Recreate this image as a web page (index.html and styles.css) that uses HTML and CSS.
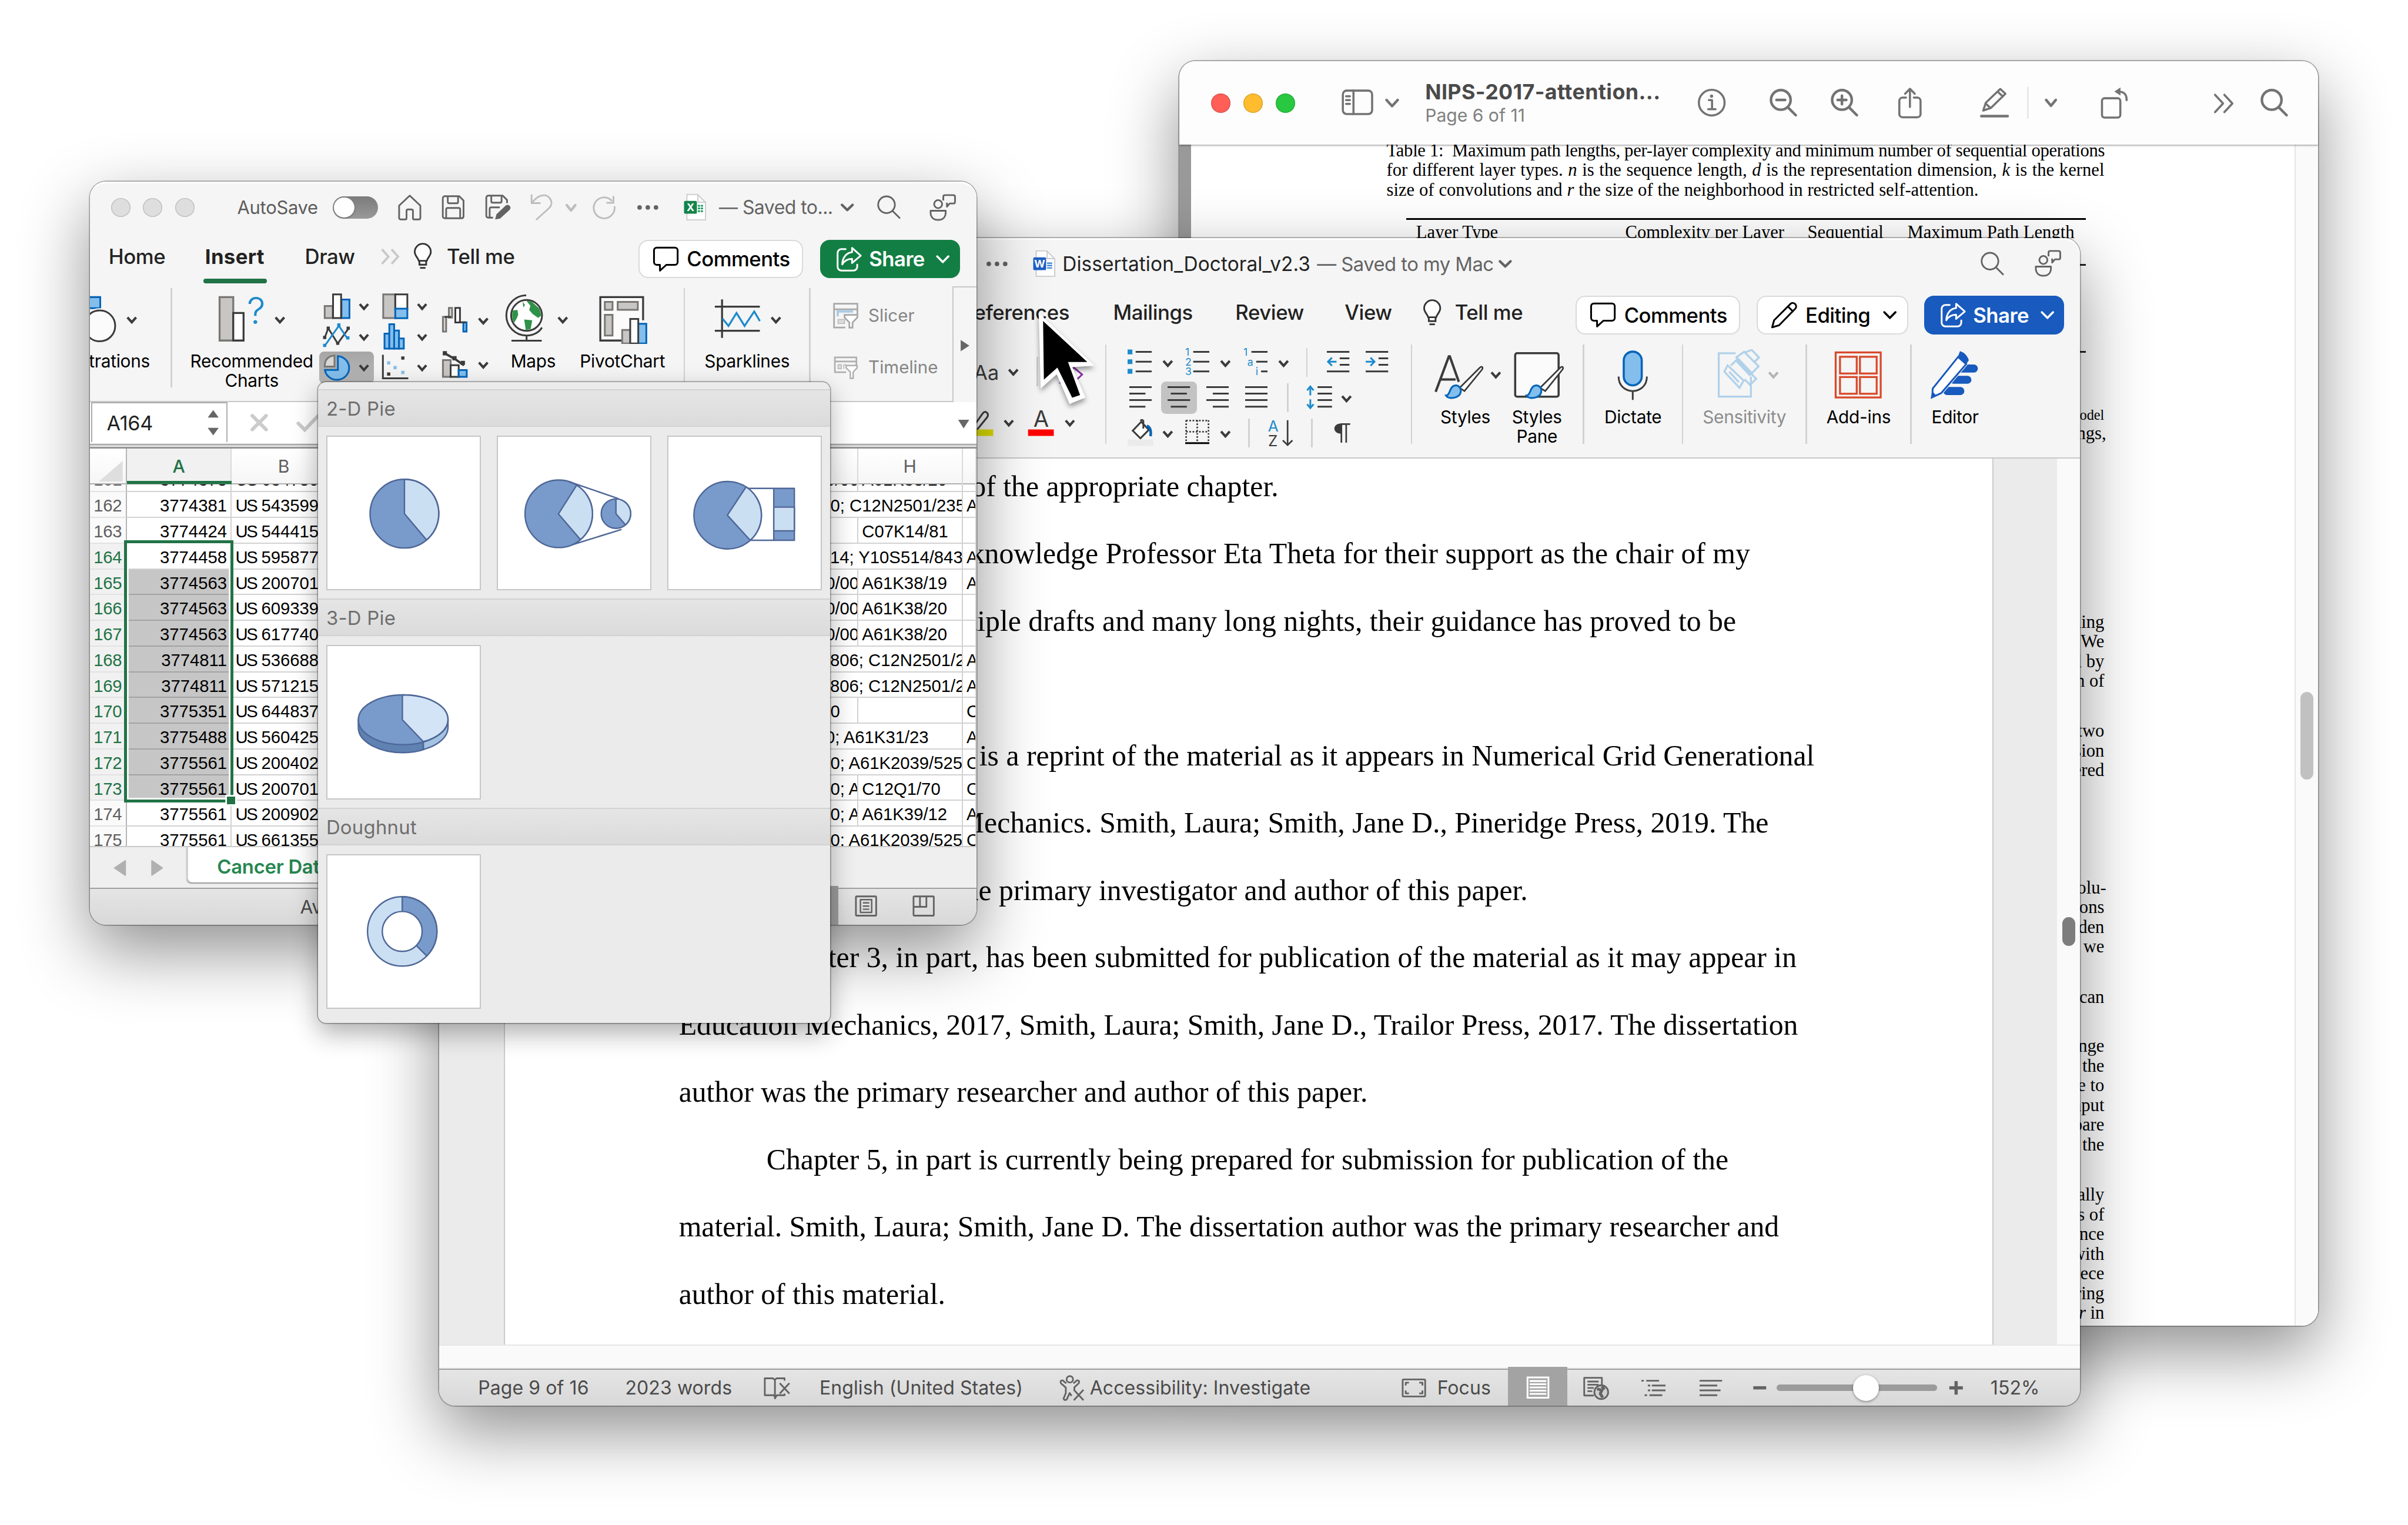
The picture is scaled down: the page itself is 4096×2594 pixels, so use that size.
FILE: index.html
```html
<!DOCTYPE html>
<html lang="en">
<head>
<meta charset="utf-8">
<title>Desktop</title>
<link rel="stylesheet" href="styles.css">
</head>
<body>
<main class="desktop">

<!-- ===== Preview ===== -->
<section class="window preview">
  <header class="pv-bar">
    <div class="lights"><i class="red"></i><i class="amber"></i><i class="green"></i></div>
    <svg class="g" width="20" height="18" viewBox="0 0 20 18"><rect x=".8" y="1.5" width="18.2" height="14.6" rx="2.4"/><path d="M7.4 1.5v14.6M2.8 5h2.4M2.8 7.4h2.4M2.8 9.8h2.4"/></svg>
    <svg class="g bold" width="10" height="8" viewBox="0 0 10 8"><path d="M1.6 2.2l3.5 3.8 3.5-3.8"/></svg>
    <div class="pv-title"><b>NIPS-2017-attention...</b><span>Page 6 of 11</span></div>
    <svg class="g" width="18" height="18" viewBox="0 0 18 18"><circle cx="9" cy="9" r="8"/><path d="M7.2 7.4h2v5.6M6.8 13.1h4.6"/><circle class="dot" cx="8.9" cy="4.9" r="1"/></svg>
    <svg class="g bold" width="18" height="18" viewBox="0 0 18 18"><circle cx="7" cy="7.3" r="6.1"/><path d="M11.5 12l4.8 4.8M4.3 7.3h5.4"/></svg>
    <svg class="g bold" width="18" height="18" viewBox="0 0 18 18"><circle cx="7" cy="7.3" r="6.1"/><path d="M11.5 12l4.8 4.8M4.3 7.3h5.4M7 4.6v5.4"/></svg>
    <svg class="g" width="16" height="20" viewBox="0 0 16 20"><path d="M5.2 6.6H3A2 2 0 0 0 1 8.6v8.2a2 2 0 0 0 2 2h9.2a2 2 0 0 0 2-2V8.6a2 2 0 0 0-2-2H10M7.6 12.4V1.2M4.6 4.2l3-3.1 3 3.1"/></svg>
    <svg class="g" width="18" height="20" viewBox="0 0 18 20"><path d="M2 14.6l1.6-4.8L12.6 1.2l3.2 3-9 8.8zM3.4 10.2l3.2 2.9M11 2.900l3.200 3"/><path class="bold" d="M.8 18.1h16.4"/></svg>
    <i class="pv-sep"></i>
    <svg class="g bold" width="10" height="8" viewBox="0 0 10 8"><path d="M2 2.2l3 3.6 3-3.6"/></svg>
    <svg class="g" width="18" height="20" viewBox="0 0 18 20"><rect x=".9" y="7" width="11.4" height="12" rx="1.6"/><path d="M16.2 8.2C16.3 5 15 2.9 11.2 2.8"/><path class="dot" d="M12.4.3v5L8.6 2.8z"/></svg>
    <svg class="g" width="14" height="12" viewBox="0 0 14 12"><path d="M1 .8l5 5.4-5 5.4M6.8.8l5 5.4-5 5.4"/></svg>
    <svg class="g bold" width="18" height="18" viewBox="0 0 18 18"><circle cx="7" cy="7.3" r="6.1"/><path d="M11.5 12l4.8 4.8"/></svg>
  </header>
  <div class="pv-body">
    <div class="pv-edge"></div>
    <article class="paper">
      <p class="cap">Table 1:&nbsp; Maximum path lengths, per-layer complexity and minimum number of sequential operations</p>
      <p class="cap">for different layer types. <em>n</em> is the sequence length, <em>d</em> is the representation dimension, <em>k</em> is the kernel</p>
      <p class="cap last">size of convolutions and <em>r</em> the size of the neighborhood in restricted self-attention.</p>
      <div class="tbl">
        <div class="tbl-head"><span>Layer Type</span><span>Complexity per Layer</span><span>Sequential</span><span>Maximum Path Length</span></div>
        <hr class="rule one"><hr class="rule two">
      </div>
      <div class="frag f0"><small>model</small><span>ngs,</span></div>
      <div class="frag f1">ling<br>We<br>l by<br>n of</div>
      <div class="frag f2">two<br>sion<br>ered</div>
      <div class="frag f3"><span>olu-</span><br>ons<br>den<br>we</div>
      <div class="frag f4">can</div>
      <div class="frag f5">nge<br>the<br>e to<br>nput<br>pare<br>the</div>
      <div class="frag f6">ally<br>s of<br>nce<br>with<br>iece<br>ring<br><em>r</em> in</div>
    </article>
    <div class="pv-scroll"><i></i></div>
  </div>
</section>

<!-- ===== Word ===== -->
<section class="window word">
  <header class="w-title">
    <svg class="tb" width="14" height="16" viewBox="0 0 14 16"><g class="dot"><circle cx="1.8" cy="8" r="1.4"/><circle cx="6.9" cy="8" r="1.4"/><circle cx="12" cy="8" r="1.4"/></g></svg>
    <svg class="file" width="15" height="18" viewBox="0 0 15 18"><path class="sheet" d="M2 1h6.6L13.6 6v10.8H2z"/><path class="fold" d="M8.8 1v4.8h4.8"/><rect x=".2" y="5" width="8" height="8" rx=".8" fill="#1f5fc4"/><text x="4.2" y="11.3">W</text><path d="M8.8 8.6h3.2M8.8 10.1h3.2M8.8 11.6h3.2" stroke="#2b7cd3" stroke-width=".8"/></svg>
    <span class="doc">Dissertation_Doctoral_v2.3</span>
    <span class="saved">— Saved to my Mac</span>
    <svg class="tb bold" width="10" height="16" viewBox="0 0 10 16"><path d="M1.6 6.4l3.3 3.2 3.3-3.2"/></svg>
    <svg class="tb" width="16" height="16" viewBox="0 0 16 16"><circle cx="6.2" cy="6.3" r="5.2"/><path d="M10 10.2l4.6 4.6"/></svg>
    <svg class="tb" width="17" height="17" viewBox="0 0 17 17"><circle cx="5.4" cy="6.3" r="2.5"/><path d="M.7 10.4h9.4v1c0 3.200-2 4.700-4.700 4.700S.7 14.600.7 11.400zM9.600.7h5.200q1.100 0 1.100 1.100v3q0 1.100-1.100 1.100h-2.200L10.900 7.900V5.900h-.600M9.600.7q-1 0-1 1.100v2.200"/></svg>
  </header>
  <div class="w-tabs">
    <span>eferences</span><span>Mailings</span><span>Review</span><span>View</span>
    <svg class="bulb" width="12" height="17" viewBox="0 0 12 17"><path d="M3.400 11.200C3 9.200.900 8.200.900 5.600a5 5 0 0 1 10 0c0 2.600-2.100 3.600-2.500 5.600zM3.800 11.200v2.400h4.200v-2.400"/><path d="M4.200 15.600h3.400"/></svg>
    <span>Tell me</span>
    <div class="btn b-comm"><svg width="17" height="16" viewBox="0 0 17 16"><path d="M2.600.8h11.300a1.700 1.700 0 0 1 1.700 1.700v7.300a1.700 1.700 0 0 1-1.700 1.700H8.600l-4 3.600v-3.600h-2A1.700 1.700 0 0 1 .9 9.800V2.500A1.700 1.700 0 0 1 2.600.8z"/></svg>Comments</div>
    <div class="btn b-edit"><svg width="17" height="17" viewBox="0 0 17 17"><path d="M.9 16l1.200-4.400L12.200 1.500c2-1.900 4.900.9 3 3L5.200 14.700zM10.700 3l3 3"/></svg>Editing<svg class="chev" width="10" height="8" viewBox="0 0 10 8"><path d="M1.500 2.200l3.500 3.600 3.500-3.600"/></svg></div>
    <div class="btn b-share blue"><svg width="17" height="16" viewBox="0 0 17 16"><path d="M6 1.700H3.400A2.400 2.400 0 0 0 1 4.100v8.600a2.400 2.400 0 0 0 2.400 2.400h7.400a2.400 2.400 0 0 0 2.400-2.400v-1.400M10 1l5.400 4.800L10 10.400V7.800C7 7.800 5.300 8.900 3.900 11.200 4 7 6.500 4 10 3.700z"/></svg>Share<svg class="chev" width="10" height="8" viewBox="0 0 10 8"><path d="M1.500 2.200l3.500 3.600 3.500-3.600"/></svg></div>
  </div>
  <div class="w-ribbon">
    <div class="fontgrp">
      <div class="r1">
        <svg class="ic" width="34" height="18" viewBox="0 0 34 18"><text x="-.6" y="14.200" font-size="12.500">Aa</text><path class="cv" d="M21.300 7.900l2.700 3 2.700-3"/></svg>
        <i class="ssep"></i>
        <svg class="ic" width="30" height="18" viewBox="0 0 30 18"><path d="M14 16l8-9.500 5.300 4.500-5.300 5z" fill="#fff" stroke="#8a2da5"/></svg>
      </div>
      <div class="r2">
        <svg class="ic" width="36" height="18" viewBox="0 0 36 18"><path d="M3 11.500l6-8.500q1.500-2 3 0 .6 1.300-.4 2.600l-6 7.400-3 .500z"/><path d="M1 15h14.500" stroke="#dede00" stroke-width="4"/><path class="cv" d="M22.600 7.400l2.600 3 2.600-3"/></svg>
        <svg class="ic" width="34" height="18" viewBox="0 0 34 18"><text x="4.300" y="11.200" font-size="14">A</text><path d="M1 15h16" stroke="#f00" stroke-width="4"/><path class="cv" d="M24.400 7.400l2.600 3 2.600-3"/></svg>
      </div>
    </div>
    <i class="sep"></i>
    <div class="para">
      <div class="p1">
        <svg class="ic" width="30" height="18" viewBox="0 0 30 18"><path d="M5 2.400h10M5 8.500h10M5 14.500h10"/><path d="M0 2.400h3M0 8.500h3M0 14.500h3" stroke="#1e8bcd" stroke-width="3"/><path class="cv" d="M22.300 8l2.700 3 2.700-3"/></svg>
        <svg class="ic" width="30" height="18" viewBox="0 0 30 18"><path d="M5 2.400h10M5 8.500h10M5 14.500h10"/><g class="bt"><text x="0" y="4.900">1</text><text x="0" y="10.900">2</text><text x="0" y="16.900">3</text></g><path class="cv" d="M22.300 8l2.700 3 2.700-3"/></svg>
        <svg class="ic" width="30" height="18" viewBox="0 0 30 18"><path d="M5 2.400h10M8 8.500h7M11 14.500h4"/><g class="bt"><text x="0" y="4.900">1</text><text x="2.500" y="10.900">a</text><text x="7.600" y="16.900">i</text></g><path class="cv" d="M22.300 8l2.700 3 2.700-3"/></svg>
        <i class="ssep"></i>
        <svg class="ic" width="15" height="18" viewBox="0 0 15 18"><path d="M0 2.400h14M8 6.400h6M8 10.400h6M0 14.500h14"/><path d="M6 8.500H.8M3.200 6L.7 8.500 3.200 11" stroke="#1e8bcd"/></svg>
        <svg class="ic" width="15" height="18" viewBox="0 0 15 18"><path d="M0 2.400h14M8 6.400h6M8 10.400h6M0 14.500h14"/><path d="M0 8.500h5.400M3 6l2.500 2.500L3 11" stroke="#1e8bcd"/></svg>
      </div>
      <div class="p2">
        <svg class="ic" width="14" height="18" viewBox="0 0 14 18"><path d="M0 2.400h14M0 6.400h10M0 10.400h14M0 14.500h10"/></svg>
        <span class="on"><svg class="ic" width="14" height="18" viewBox="0 0 14 18"><path d="M0 2.400h14M2 6.400h10M0 10.400h14M2 14.500h10"/></svg></span>
        <svg class="ic" width="14" height="18" viewBox="0 0 14 18"><path d="M0 2.400h14M4 6.400h10M0 10.400h14M4 14.500h10"/></svg>
        <svg class="ic" width="14" height="18" viewBox="0 0 14 18"><path d="M0 2.400h14M0 6.400h14M0 10.400h14M0 14.500h14"/></svg>
        <i class="ssep"></i>
        <svg class="ic" width="30" height="18" viewBox="0 0 30 18"><path d="M7 2.400h9M7 6.400h9M7 10.400h9M7 14.500h9"/><path d="M2.500 7.500V2M.5 4.400l2-2.400 2 2.400M2.500 10v5.500M.5 13l2 2.400 2-2.400" stroke="#1e8bcd"/><path class="cv" d="M22.300 8l2.700 3 2.700-3"/></svg>
      </div>
      <div class="p3">
        <svg class="ic" width="30" height="18" viewBox="0 0 30 18"><path d="M3.200 7.500L8.500 2l4.700 5-5.200 5.300zM9.800 6.200V1.400Q8.900.2 8 1.400" fill="#fff"/><path d="M12 4.500q3 1 2.300 6.500" stroke="#0364b8" stroke-width="1.600"/><path d="M0 15h16" stroke="#ebebeb" stroke-width="4"/><path class="cv" d="M22.300 8l2.700 3 2.700-3"/></svg>
        <svg class="ic" width="30" height="18" viewBox="0 0 30 18"><path d="M.6 1.200h14M.6 8.200h14M.6 1v13M7.500 1v13M14.500 1v13" stroke-width="1" stroke-dasharray="1 1"/><path d="M0 15.300h15" stroke="#000"/><path class="cv" d="M22.300 8l2.700 3 2.700-3"/></svg>
        <i class="ssep"></i>
        <svg class="ic" width="18" height="18" viewBox="0 0 18 18"><text x=".3" y="8" font-size="9.500" style="fill:#1e8bcd">A</text><text x=".4" y="17" font-size="9.500">Z</text><path d="M12.500 1v15.500M9.500 13.500l3 3 3-3" stroke-width="1"/></svg>
        <i class="ssep"></i>
        <svg class="ic" width="12" height="18" viewBox="0 0 12 18"><path d="M5 3.400h5.500M5 3v12M8 3v12" stroke-width="1"/><path d="M5 3C-.8 3-.8 9.400 5 9.400z" fill="#3b3b3b" stroke="none"/></svg>
      </div>
    </div>
    <i class="sep"></i>
    <div class="big k-styles"><svg class="ic" width="50" height="32" viewBox="0 0 50 32"><path d="M6.600 26.500L14.800 4.500h.6l5.600 15.800M9.500 18.800h9.500" stroke-width="1.500"/><path d="M21.500 24L34 11.500c1.300-1.200 2.400-.2 1.300 1.300L24.500 26z" fill="#fff" stroke-width="1"/><path d="M13 28.800c2.800.1 2-6.300 6.200-6.300 4 0 5.200 8-3.400 7.800-1.600-.1-2.300-.7-2.800-1.500z" fill="#83beec" stroke="#0364b8" stroke-width="1.100"/><path class="cv" d="M41.300 14.400l2.700 3 2.700-3"/></svg><span>Styles</span></div>
    <div class="big k-pane"><svg class="ic" width="36" height="32" viewBox="0 0 36 32"><rect x="4.500" y="2.500" width="27" height="27" rx="1.200" fill="#fbfbfb" stroke-width="1.300"/><path d="M20 24L32.500 11.500c1.300-1.200 2.400-.2 1.300 1.300L23.200 26z" fill="#fff" stroke-width="1"/><path d="M11.500 28.800c2.800.1 2-6.300 6.200-6.300 4 0 5.200 8-3.400 7.800-1.600-.1-2.300-.7-2.800-1.500z" fill="#83beec" stroke="#0364b8" stroke-width="1.100"/></svg><span>Styles<br>Pane</span></div>
    <i class="sep"></i>
    <div class="big k-dict"><svg class="ic" width="24" height="32" viewBox="0 0 24 32"><rect x="6.200" y="1.500" width="11.200" height="21" rx="5.600" fill="#83beec" stroke="#0364b8" stroke-width="1.300"/><path d="M3 17c0 12 17.600 12 17.600 0M11.800 26.200v5.300" stroke-width="1.100"/></svg><span>Dictate</span></div>
    <i class="sep"></i>
    <div class="big k-sens dim"><svg class="ic" width="46" height="32" viewBox="0 0 46 32"><g stroke="#b0d1ea" stroke-width="1.200"><path d="M14 2.500H3.500v27h20V17"/><path d="M11 10.200l3.800-3.800 12 12-3.800 3.800-3.500-3.500M14.500 5l4.800-3.400 9 9-4.500 4.600zM20 2l4-1.600 4.500 4.800-3.200 3"/><path d="M9 10l10 9.500-2.600 4.500L7 14zM10 14l6 6.500"/></g><path d="M14.800 6.400l9 9.500" stroke="#b0d1ea" stroke-width="3"/><path class="cv" style="stroke:#b5b5b5" d="M34.800 14.400l2.700 3 2.700-3"/></svg><span>Sensitivity</span></div>
    <i class="sep"></i>
    <div class="big k-add"><svg class="ic" width="30" height="32" viewBox="0 0 30 32"><g stroke="#d9492a" stroke-width="1.200"><rect x=".9" y="2" width="28" height="28"/><rect x="3.600" y="4.700" width="10.400" height="10.400"/><rect x="16" y="4.700" width="10.400" height="10.400"/><rect x="3.600" y="17.300" width="10.400" height="10.400"/><rect x="16" y="17.300" width="10.400" height="10.400"/></g></svg><span>Add-ins</span></div>
    <i class="sep"></i>
    <div class="big k-ed"><svg class="ic" width="32" height="32" viewBox="0 0 32 32"><path d="M19 12h8.600M15 19h8.600M11 26h8.200" stroke="#185abd" stroke-width="5" stroke-linecap="round"/><path d="M2 24.500L17.500 5l5 4.500L7.300 27.300.9 31z" fill="#fff" stroke="#f5f5f5" stroke-width="2"/><path d="M2 24.500L17.800 4.800l5 4.500L7.300 27.300l-5.500 2.500z" fill="#fff" stroke="#185abd" stroke-width="1.100"/><path d="M17.500 5l1.500-3.800q4 1.300 5.500 5.600L22.800 9.500zM1.700 26l2.700 3L.7 31z" fill="#185abd" stroke="none"/></svg><span>Editor</span></div>
  </div>
  <div class="w-doc">
    <div class="page">
      <p class="end" style="width:372.800px">of the appropriate chapter.</p>
      <p class="end" style="width:666px">knowledge Professor Eta Theta for their support as the chair of my</p>
      <p class="end" style="width:657.300px">tiple drafts and many long nights, their guidance has proved to be</p>
      <p>&nbsp;</p>
      <p class="end" style="width:706px">is a reprint of the material as it appears in Numerical Grid Generational</p>
      <p class="end" style="width:677.500px">Mechanics. Smith, Laura; Smith, Jane D., Pineridge Press, 2019. The</p>
      <p class="end" style="width:527.800px">he primary investigator and author of this paper.</p>
      <p class="ind">Chapter 3, in part, has been submitted for publication of the material as it may appear in</p>
      <p>Education Mechanics, 2017, Smith, Laura; Smith, Jane D., Trailor Press, 2017. The dissertation</p>
      <p>author was the primary researcher and author of this paper.</p>
      <p class="ind">Chapter 5, in part is currently being prepared for submission for publication of the</p>
      <p>material. Smith, Laura; Smith, Jane D. The dissertation author was the primary researcher and</p>
      <p>author of this material.</p>
    </div>
    <div class="w-vscroll"><i></i></div>
  </div>
  <div class="w-hscroll"></div>
  <footer class="w-status">
    <span>Page 9 of 16</span><span>2023 words</span>
    <svg class="tb" width="17" height="16" viewBox="0 0 17 16"><path d="M7 13.500l-.8-1H.7V2h5l1.200 1 1.200-1H13v1.500M7 3v11.500l1.200-2H13v-1M10 5l6 6.500M16 5l-6 6.500"/></svg>
    <span>English (United States)</span>
    <svg class="tb" width="17" height="17" viewBox="0 0 17 17"><circle cx="6.500" cy="3" r="2"/><path d="M4.300 5.500L2 3.600Q.2 3.600 1 5.500l3 2.600v3.400L2.600 15q.7 1.500 2 .5l1.800-4 1.200 1.800M8.700 5.500L11 3.600q1.900 0 1 1.900L9.300 8v1.500M9 9.500l6 6.500M15 9.500l-6 6.500"/></svg>
    <span>Accessibility: Investigate</span>
    <svg class="tb" width="16" height="16" viewBox="0 0 16 16"><rect x=".7" y="2.700" width="14" height="10.600" rx=".6"/><path d="M2.600 6.500V4.700h2M11 4.700h2v1.800M2.600 9.600v1.800h2M11 11.400h2V9.600"/></svg>
    <span>Focus</span>
    <div class="sel"><svg width="16" height="16" viewBox="0 0 16 16"><path d="M1.200 1.500h13v12.600h-13z"/><path d="M2.500 3.700h10.400M2.500 5.700h10.400M2.500 7.700h10.400M2.500 9.700h10.400M2.500 11.700h10.400"/></svg></div>
    <svg class="tb" width="18" height="16" viewBox="0 0 18 16"><path d="M12 6V1.700H1v11h6M3 4h7M3 6h7M3 8h4M3 10h3"/><circle cx="11.600" cy="10.600" r="4.300" fill="#d0d0d0"/><path d="M9 8.500l3 1-1 2 1.500 2.500M12 7l1.500 2" stroke-width="1.800"/></svg>
    <svg class="tb" width="16" height="16" viewBox="0 0 16 16"><path d="M0 3.500h1.500M3 3.500h8M4 6.500h1.500M6.500 6.500H15M4 9.500h1.500M6.500 9.500H15M2 12.500h1.500M5 12.500h8"/></svg>
    <svg class="tb" width="16" height="16" viewBox="0 0 16 16"><path d="M0 3.500h14M0 6.500h11M0 9.500h13M0 12.500h11"/></svg>
    <svg class="tb" width="10" height="10" viewBox="0 0 10 10"><path d="M.5 5h8" stroke-width="2"/></svg>
    <div class="slider"><i></i></div>
    <svg class="tb" width="10" height="10" viewBox="0 0 10 10"><path d="M.3 5h8.400M4.500.8v8.400" stroke-width="2"/></svg>
    <span>152%</span>
  </footer>
</section>

<!-- ===== Excel ===== -->
<section class="window excel">
  <header class="x-title">
    <div class="lights off"><i></i><i></i><i></i></div>
    <span class="auto">AutoSave</span>
    <div class="toggle"><i></i></div>
    <svg class="tb" width="16" height="17" viewBox="0 0 16 17"><path d="M.7 7.200L7.300 1l6.600 6.200v7.600q0 1-1 1H10q-.7 0-.7-.7v-4.500q0-1-1-1H6.300q-1 0-1 1v4.500q0 .7-.7.7H1.700q-1 0-1-1z"/></svg>
    <svg class="tb" width="16" height="16" viewBox="0 0 16 16"><path d="M2.200 1H11l2.700 2.700v9.700q0 1.300-1.300 1.300H2.100Q.8 14.700.8 13.400V2.400Q.8 1 2.200 1zM3.900 1v3.600q0 .8.8.8h4.800q.8 0 .8-.8V1M2.900 14.700V9.200q0-.9.9-.9h6.900q.9 0 .9.9v5.500"/></svg>
    <svg class="tb" width="17" height="17" viewBox="0 0 17 17"><path d="M5 14.700H2.100Q.8 14.700.8 13.400V2.400Q.8 1 2.200 1H11l2.700 2.700v2M3.900 1v3.600q0 .8.8.8h4.800q.8 0 .8-.8V1M2.900 14.700V9.200q0-.9.9-.9h5.400"/><path class="dot" d="M6.300 15.800l.8-3.200 5.700-5.400q1.600-1 2.600.2 1 1.200-.2 2.600l-5.800 5.300z"/></svg>
    <svg class="tb pale" width="16" height="18" viewBox="0 0 16 18"><path d="M.8 1v5.400h5.600M1 6.200C5 1 9.500.3 12 3.200c1.800 2.300 1.400 4.600-.3 6.300L3.600 16.800"/></svg>
    <svg class="tb bold pale2" width="8" height="16" viewBox="0 0 8 16"><path d="M.8 6.600l2.600 3.200 2.600-3.200"/></svg>
    <svg class="tb pale" width="16" height="16" viewBox="0 0 16 16"><path d="M13.600 7.200a6.500 6.500 0 1 1-1.500-3.200M13 .9v4.200H8.600"/></svg>
    <svg class="tb" width="14" height="16" viewBox="0 0 14 16"><g class="dot"><circle cx="1.800" cy="8" r="1.400"/><circle cx="6.900" cy="8" r="1.400"/><circle cx="12" cy="8" r="1.400"/></g></svg>
    <svg class="file" width="15" height="18" viewBox="0 0 15 18"><path class="sheet" d="M2 1h6.600L13.600 6v10.800H2z"/><path class="fold" d="M8.800 1v4.800h4.800"/><rect x=".2" y="5" width="8" height="8" rx=".8" fill="#14834a"/><text x="4.200" y="11.300">X</text><path d="M8.800 8h3.200M8.800 9.700h3.200M8.800 11.400h3.200" stroke="#21a366" stroke-width="1.100" stroke-dasharray="1.400 .4"/></svg>
    <span class="saved">— Saved to...</span>
    <svg class="tb bold" width="10" height="16" viewBox="0 0 10 16"><path d="M.8 6.400l3.300 3.200 3.300-3.200"/></svg>
    <svg class="tb" width="16" height="16" viewBox="0 0 16 16"><circle cx="6.200" cy="6.300" r="5.200"/><path d="M10 10.200l4.600 4.600"/></svg>
    <svg class="tb" width="17" height="17" viewBox="0 0 17 17"><circle cx="5.400" cy="6.300" r="2.500"/><path d="M.7 10.400h9.400v1c0 3.200-2 4.700-4.700 4.700S.7 14.600.7 11.400zM9.600.7h5.200q1.100 0 1.100 1.100v3q0 1.100-1.100 1.100h-2.200L10.900 7.900V5.900h-.6M9.600.7q-1 0-1 1.100v2.200"/></svg>
  </header>
  <div class="x-tabs">
    <span>Home</span><span class="cur">Insert</span><span>Draw</span>
    <svg class="more" width="13" height="12" viewBox="0 0 13 12"><path d="M1 1.500l4 4.500-4 4.500M7 1.500l4 4.500-4 4.500"/></svg>
    <svg class="bulb" width="12" height="17" viewBox="0 0 12 17"><path d="M3.400 11.200C3 9.200.9 8.200.9 5.600a5 5 0 0 1 10 0c0 2.600-2.100 3.600-2.500 5.600zM3.800 11.200v2.400h4.200v-2.400"/><path d="M4.200 15.600h3.400"/></svg>
    <span>Tell me</span>
    <div class="btn b-comm"><svg width="17" height="16" viewBox="0 0 17 16"><path d="M2.600.8h11.300a1.700 1.700 0 0 1 1.700 1.700v7.300a1.700 1.700 0 0 1-1.700 1.700H8.600l-4 3.600v-3.600h-2A1.700 1.700 0 0 1 .9 9.800V2.500A1.700 1.700 0 0 1 2.600.8z"/></svg>Comments</div>
    <div class="btn b-share green"><svg width="17" height="16" viewBox="0 0 17 16"><path d="M6 1.700H3.400A2.400 2.400 0 0 0 1 4.100v8.600a2.400 2.400 0 0 0 2.400 2.400h7.400a2.400 2.400 0 0 0 2.400-2.400v-1.400M10 1l5.400 4.800L10 10.400V7.800C7 7.800 5.300 8.900 3.900 11.200 4 7 6.500 4 10 3.700z"/></svg>Share<svg class="chev" width="10" height="8" viewBox="0 0 10 8"><path d="M1.500 2.200l3.500 3.600 3.500-3.600"/></svg></div>
  </div>
  <div class="x-ribbon">
    <div class="x-groups">
      <div class="big k-ill"><svg class="ic" width="50" height="30" viewBox="0 0 50 30"><path d="M-3 1.600H6.400V8.500H-3z" fill="#83beec" stroke="#0364b8"/><circle cx="6.100" cy="19.500" r="11" fill="#f5f5f5" stroke="none"/><circle cx="6.100" cy="19.500" r="9.600" fill="#fbfbfb" stroke-width="1.100"/><path class="cv" d="M23.300 14.200l2.700 3 2.700-3"/></svg><span>trations</span></div>
      <i class="sep"></i>
      <div class="big k-rec"><svg class="ic" width="74" height="30" viewBox="0 0 74 30"><path d="M17 1.600h8.500v27H17z" fill="#c8c6c4" stroke="#797774" stroke-width="1.200"/><path d="M25.500 11.500h6.400v17.100h-6.400z" fill="#fff" stroke-width="1.200"/><text x="34" y="18.300" font-size="23" font-weight="300" style="fill:#1e8bcd">?</text><path class="cv" d="M51.800 14.200l2.700 3 2.700-3"/></svg><span>Recommended<br>Charts</span></div>
      <div class="x-small">
        <svg class="ic" width="34" height="19" viewBox="0 0 34 19"><path d="M3.400 9.700h5v7.500h-5z" fill="#c8c6c4" stroke="#797774"/><path d="M13.800 5.700h5v11.500h-5z" fill="#83beec" stroke="#0364b8"/><path d="M8.600 2.500h5v14.700h-5z" fill="#fff"/><path class="cv" d="M25.200 8.500l2.600 3 2.600-3"/></svg>
        <svg class="ic" width="34" height="19" viewBox="0 0 34 19"><path d="M3.600 2.500h7.500v14.700H3.600z" fill="#c8c6c4" stroke="#797774"/><path d="M11.100 2.500h7.500v9h-7.500z" fill="#fff"/><path d="M11.100 11.300h7.500v6h-7.500z" fill="#83beec" stroke="#0364b8"/><path class="cv" d="M25.200 8.500l2.600 3 2.600-3"/></svg>
        <svg class="ic" width="34" height="19" viewBox="0 0 34 19"><path d="M3.400 10.500l2.200-6L11.500 14l6.500-9"/><path d="M3.400 15.500L12.200 3l5.400 8" stroke="#1e8bcd"/><path d="M2.400 9.200h2v2h-2zM4.600 3.500h2v2h-2zM10.500 12.800h2v2h-2zM17 3.500h2v2h-2z" fill="#3b3b3b" stroke="none"/><path d="M2.400 14.200h2v2h-2zM11.200 1.500h2v2h-2zM16.800 9.500h2v2h-2z" fill="#1e8bcd" stroke="none"/><path class="cv" d="M25.200 8.500l2.600 3 2.600-3"/></svg>
        <svg class="ic" width="34" height="19" viewBox="0 0 34 19"><g fill="#83beec" stroke="#0364b8"><path d="M4.400 7.900h3v9.300h-3z"/><path d="M7.400 2h3v15.200h-3z"/><path d="M10.400 5.900h3v11.300h-3z"/><path d="M13.400 10.900h3v6.300h-3z"/></g><path class="cv" d="M25.200 8.500l2.600 3 2.600-3"/></svg>
        <svg class="ic hot" width="34" height="20" viewBox="0 0 34 20"><path d="M9.500 2.500v6.800H3.400Q3.400 3 9.500 2.500z" fill="#d9d7d5" stroke="#797774"/><path d="M11.600 2.800v8.600H3.500a7.600 7.400 0 1 0 8.100-8.600z" fill="#83beec" stroke="#0364b8"/><path class="cv" d="M25.200 8.500l2.600 3 2.600-3"/></svg>
        <svg class="ic" width="34" height="19" viewBox="0 0 34 19"><path d="M3.400 2v14.600h15.800"/><g stroke="none"><path d="M14.800 3h2v2h-2zM6 13h2v2H6z" fill="#3b3b3b"/><path d="M6 6h2v2H6zM10 9h2v2h-2zM14.800 12h2v2h-2z" fill="#83beec"/></g><path class="cv" d="M25.200 8.500l2.600 3 2.600-3"/></svg>
      </div>
      <div class="x-small2">
        <svg class="ic" width="34" height="19" viewBox="0 0 34 19"><path d="M4.900 8h2v9.200h-2zM8.600 2.500h2v6h-2z" fill="#d9d7d5" stroke="#797774"/><path d="M12.600 2.500h2.900v9h-2.900z" fill="#fff"/><path d="M17.600 11.400h2v5.800h-2z" fill="#83beec" stroke="#0364b8"/><path d="M6 8h4M14.500 11.400h4.500"/><path class="cv" d="M27.300 9l2.700 3 2.700-3"/></svg>
        <svg class="ic" width="34" height="19" viewBox="0 0 34 19"><path d="M6 2.500l7 4 5 3.500" stroke-width="1.400"/><path d="M4.800 1.200h2.600v2.600H4.800zM10.800 4.300h2.600v2.600h-2.600zM16 7.200h2.600v2.600H16z" fill="#3b3b3b" stroke="none"/><path d="M4.900 6.800h4.800v10.400H4.900z" fill="#c8c6c4" stroke="#797774"/><path d="M9.700 10h5v7.200h-5z" fill="#fff"/><path d="M14.700 13h5v4.200h-5z" fill="#83beec" stroke="#0364b8"/><path class="cv" d="M27.300 8.300l2.700 3 2.700-3"/></svg>
      </div>
      <div class="big k-maps"><svg class="ic" width="48" height="30" viewBox="0 0 48 30"><circle cx="20" cy="13" r="9.600" fill="#fff" stroke-width="1.100"/><path d="M20 4l3 .2 5 4.600 1.200 4.200-2 1.500-3.600-2.500-2-2.500.8-2.500zM17.500 4.500l1.500 2-1 1.500zM11.300 10l3-.5.5 3-1 2.500-1.600 2.500q-1.700-3-.9-7.500zM18.500 15.500l5 .5-1 5.500-3 .5z" fill="#2f9248" stroke="none"/><path d="M19.800.5a12.500 12.500 0 0 0 .2 25q6.500-.2 9.600-5M20 25.500v3M10.600 28.700h18.800" stroke-width="1.100"/><path class="cv" d="M39.800 14.200l2.700 3 2.700-3"/></svg><span>Maps</span></div>
      <div class="big k-piv"><svg class="ic" width="54" height="31" viewBox="0 0 54 31"><path d="M27 28.600H13.200V1.600h26.600V16" fill="#fbfbfb" stroke-width="1.200"/><path d="M16 4.600h4.800v4.900H16zM24 4.600h12.500v4.900H24zM16 12.600h4.800v12.900H16z" fill="#c8c6c4" stroke="#797774"/><path d="M26.800 22h5v8.400h-5z" fill="#c8c6c4" stroke="#797774"/><path d="M36.600 18.200h5.200v12.200h-5.200z" fill="#83beec" stroke="#0364b8"/><path d="M31.800 15.200h5v15.200h-5z" fill="#fff"/></svg><span>PivotChart</span></div>
      <i class="sep"></i>
      <div class="big k-spark"><svg class="ic" width="56" height="30" viewBox="0 0 56 30"><path d="M8 7.500h28M8 22.500h28M12.500 3v24" stroke-width="1.200"/><path d="M12.800 15l3.700 4.500 5-8 5 8 6-9 3.500 6" stroke="#1e8bcd" stroke-width="1.200"/><path class="cv" d="M43.300 14.200l2.700 3 2.700-3"/></svg><span>Sparklines</span></div>
      <i class="sep"></i>
      <div class="x-slice">
        <div><svg width="17" height="18" viewBox="0 0 17 18"><path d="M8 16.500H1V1.700h14.500v7M1 5.200h14.500" fill="none" stroke="#a8a8a8"/><path d="M3.300 9.500v-3h9.500" stroke="#a9cbe8" fill="none" stroke-width="1.400"/><path d="M3.500 11.500h4v2.500h-4z" fill="#ddd" stroke="#bbb" stroke-width=".6"/><path d="M7.500 8.600h8v1.600l-3 3.200v3.200h-2v-3.200l-3-3.200z" fill="#fff" stroke="#a8a8a8"/></svg><span>Slicer</span></div>
        <div><svg width="17" height="18" viewBox="0 0 17 18"><path d="M8.500 12.500h-7V3.200h13.400v5M1.500 5.800h13.400" fill="none" stroke="#b0b0b0"/><path d="M3.500 7.800h2v2.500h-2zM7 7.800h1.500M7 7.800v2.600" fill="#ddd" stroke="#bbb" stroke-width=".6"/><path d="M8.500 8.300h6.800v1.500l-2.400 2.500v4h-1.800v-4l-2.600-2.500z" fill="#fff" stroke="#b0b0b0" stroke-width=".9"/></svg><span>Timeline</span></div>
      </div>
    </div>
    <div class="x-next"><svg width="6" height="8" viewBox="0 0 6 8"><path d="M.4.500v7L5.800 4z" fill="#666"/></svg></div>
  </div>
  <div class="x-formula">
    <div class="namebox"><span>A164</span><svg width="8" height="17" viewBox="0 0 8 17"><path d="M.5 5.200L3.900.5l3.400 4.700zM.5 11.600l3.400 4.700 3.400-4.700z" fill="#666"/></svg></div>
    <svg class="xv" width="60" height="14" viewBox="0 0 60 14"><path d="M15.400 2.600l8.600 8.600M24 2.600l-8.600 8.600M44 7.400l4 4L56 3"/></svg>
    <svg class="dn" width="8" height="6" viewBox="0 0 8 6"><path d="M.3.400h6.900L3.700 5.800z" fill="#666"/></svg>
  </div>
  <div class="x-grid">
    <div class="hd"><span class="corner"></span><span class="a">A</span><span>B</span><span></span><span>H</span><span></span></div>
    <div class="rows">
      <div class="row"><b>161</b><span>3774378</span><span><u>US </u>6347809</span><span class="s2">0/00</span><span>A61K38/20</span><span></span></div>
      <div class="row"><b>162</b><span>3774381</span><span><u>US </u>5435999</span><span class="s1 wide">00; C12N2501/235</span><span>A</span></div>
      <div class="row"><b>163</b><span>3774424</span><span><u>US </u>5444153</span><span></span><span>C07K14/81</span><span></span></div>
      <div class="row in"><b>164</b><span>3774458</span><span><u>US </u>5958770</span><span class="s3 wide">/14; Y10S514/843</span><span>A</span></div>
      <div class="row in f"><b>165</b><span>3774563</span><span><u>US </u>2007012</span><span class="s2">0/00</span><span>A61K38/19</span><span>A</span></div>
      <div class="row in f"><b>166</b><span>3774563</span><span><u>US </u>6093390</span><span class="s2">0/00</span><span>A61K38/20</span><span></span></div>
      <div class="row in f"><b>167</b><span>3774563</span><span><u>US </u>6177402</span><span class="s2">0/00</span><span>A61K38/20</span><span></span></div>
      <div class="row in f"><b>168</b><span>3774811</span><span><u>US </u>5366888</span><span class="s3 wide">/806; C12N2501/2</span><span>A</span></div>
      <div class="row in f"><b>169</b><span>3774811</span><span><u>US </u>5712150</span><span class="s3 wide">/806; C12N2501/2</span><span>A</span></div>
      <div class="row in f"><b>170</b><span>3775351</span><span><u>US </u>6448374</span><span class="s1">00</span><span></span><span>C</span></div>
      <div class="row in f"><b>171</b><span>3775488</span><span><u>US </u>5604258</span><span class="s3 wide">0; A61K31/23</span><span>A</span></div>
      <div class="row in f"><b>172</b><span>3775561</span><span><u>US </u>2004021</span><span class="s1 wide">00; A61K2039/525</span><span>C</span></div>
      <div class="row in f"><b>173</b><span>3775561</span><span><u>US </u>2007015</span><span class="s1">00; A</span><span>C12Q1/70</span><span>C</span></div>
      <div class="row"><b>174</b><span>3775561</span><span><u>US </u>2009025</span><span class="s1">00; A</span><span>A61K39/12</span><span>A</span></div>
      <div class="row"><b>175</b><span>3775561</span><span><u>US </u>6613557</span><span class="s1 wide">00; A61K2039/525</span><span>C</span></div>
    </div>
    <div class="selection"><i></i></div>
  </div>
  <div class="x-sheets">
    <svg width="60" height="12" viewBox="0 0 60 12"><path d="M22 1.500v9L15.300 6zM38.500 1.500v9L45 6z" fill="#b0b0b0" stroke="#b0b0b0" stroke-linejoin="round" stroke-width=".8"/></svg>
    <span class="sheet-tab">Cancer Data</span>
  </div>
  <footer class="x-status">
    <span>Average</span>
    <i></i>
    <svg class="tb" width="15" height="15" viewBox="0 0 15 15"><rect x=".7" y="1" width="12.600" height="12" rx=".5"/><rect x="3.500" y="3" width="7" height="8" stroke-width=".9"/><path d="M5 5h4M5 7h4M5 9h4" stroke-width=".9"/></svg>
    <svg class="tb" width="15" height="15" viewBox="0 0 15 15"><rect x=".7" y="1" width="12.600" height="12" rx=".5"/><path d="M.7 7.500h8V1M4.700 1v6.500"/></svg>
  </footer>
</section>

<!-- ===== Pie chart gallery ===== -->
<section class="gallery">
  <h3>2-D Pie</h3>
  <div class="cards">
    <svg viewBox="0 0 96 96"><circle cx="48.600" cy="48.500" r="21.700" fill="#789bcb"/><path d="M48.600 48.500V26.800a21.700 21.700 0 0 1 13.950 38.300z" fill="#cbdff3"/></svg>
    <svg viewBox="0 0 96 96"><circle cx="38.400" cy="48.600" r="21.300" fill="#789bcb"/><path d="M38.200 48.700L49.700 30.540A21.300 21.300 0 0 1 52.100 64.900z" fill="#cbdff3"/><path d="M45 28.400l31 10.600M47 68.100l31-9.600"/><circle cx="74.500" cy="48.500" r="9.300" fill="#789bcb"/><path d="M74.500 48.500v-9.300a9.300 9.300 0 0 1 6 16.400z" fill="#cbdff3"/></svg>
    <svg viewBox="0 0 96 96"><circle cx="37.400" cy="49.500" r="21.300" fill="#789bcb"/><path d="M37.200 49.500L49 31.640A21.300 21.300 0 0 1 51.650 65.330z" fill="#cbdff3"/><path d="M50.300 32.600h16.200M51.800 65.300h14.500"/><path d="M66.500 32.600h13v32.700h-13z" fill="#789bcb"/><path d="M66.500 44.400h13v15h-13z" fill="#cbdff3"/></svg>
  </div>
  <h3>3-D Pie</h3>
  <div class="cards">
    <svg viewBox="0 0 96 96"><path d="M19.500 46.500v5c0 8.700 12.700 15.800 28.300 15.800 5 0 9.500-.7 13-2v-8z" fill="#5f82b2"/><path d="M60.500 59v6.300c9.500-2.600 15.600-8 15.600-13.800v-5z" fill="#a4c3e2"/><ellipse cx="47.800" cy="46.500" rx="28.300" ry="15.700" fill="#789bcb"/><path d="M47.300 46.500V30.800c16 0 28.800 6.500 28.800 15.700 0 6-6.500 11.500-15.600 13.800z" fill="#d3e4f6"/><path d="M60.500 59.800v5.600"/></svg>
  </div>
  <h3>Doughnut</h3>
  <div class="cards">
    <svg viewBox="0 0 96 96"><circle cx="47.200" cy="48" r="21.900" fill="#cbdff3"/><path d="M47.200 48V26.100a21.900 21.900 0 0 1 15.500 37.400z" fill="#789bcb"/><circle cx="47.200" cy="48" r="12.600" fill="#fff"/></svg>
  </div>
</section>

<svg class="cursor" width="50" height="70" viewBox="0 0 50 70"><path d="M5.800 4.500L40.400 37.300l-13.700.9 8.200 18.900-9.900 4-8-18.400L7 51.500z" fill="#fff"/><path d="M8.500 9.500L36 35H24l7.500 20.600-4.900 1.600L17.400 38.500 9 46z" fill="#000"/></svg>
</main>
</body>
</html>
```
FILE: styles.css
```css
* { box-sizing: border-box; }
html { background: #fff; overflow: hidden; }
body {
  margin: 0;
  zoom: 2.73614;
  width: 1497px;
  height: 948px;
  overflow: hidden;
  background: #fff;
  font-family: Inter, "Liberation Sans", sans-serif;
  color: #222;
}
i { font-style: normal; }
p, h3 { margin: 0; font-weight: 400; }
svg { display: block; overflow: visible; flex: none; }

.desktop { position: relative; width: 1497px; height: 948px; overflow: hidden; }

/* ---------- windows ---------- */
.window {
  position: absolute;
  display: flex;
  flex-direction: column;
  border-radius: 10px;
  isolation: isolate;
}
.window::before {
  content: "";
  position: absolute;
  inset: 0;
  border-radius: 10px;
  box-shadow: 0 0 0 .6px rgba(0,0,0,.3), 0 16px 42px rgba(0,0,0,.44);
  z-index: -1;
}
.preview { left: 733px; top: 38px; width: 708px; height: 786px; }
.word { left: 273px; top: 148px; width: 1020px; height: 726px; }
.excel { left: 56px; top: 113px; width: 551px; height: 462px; }

.lights { display: flex; gap: 8px; }
.lights i { width: 12px; height: 12px; border-radius: 50%; box-shadow: inset 0 0 0 .5px rgba(0,0,0,.15); }
.lights .red { background: #ff5f57; }
.lights .amber { background: #febc2e; }
.lights .green { background: #28c840; }
.lights.off i { background: #dedede; }

/* ---------- icon strokes ---------- */
.g { fill: none; stroke: #737373; stroke-width: 1.3; stroke-linecap: round; stroke-linejoin: round; }
.g.bold, .g .bold { stroke-width: 1.6; }
.g .dot { fill: #737373; stroke: none; }
.tb { fill: none; stroke: #636363; stroke-width: 1.05; stroke-linejoin: round; }
.tb.bold { stroke-width: 1.6; stroke-linecap: round; }
.tb.pale { stroke: #bdbdbd; }
.tb.pale2 { stroke: #bdbdbd; }
.tb .dot { fill: #636363; stroke: none; }
.ic { fill: none; stroke: #3b3b3b; stroke-width: 1.1; overflow: hidden; }
.ic text { fill: #3b3b3b; stroke: none; font-family: Inter, sans-serif; }
.ic .bt text { fill: #1e8bcd; font-size: 6.5px; }
.ic .cv { stroke-width: 1.5; stroke: #3b3b3b; fill: none; }
.file .sheet { fill: #fff; stroke: #c4c4c4; stroke-width: .6; }
.file .fold { fill: none; stroke: #c4c4c4; stroke-width: .6; }
.file text { fill: #fff; font-size: 6.5px; font-weight: 700; text-anchor: middle; }
.bulb { fill: #fdfdfd; stroke: #333; stroke-width: 1.05; }
.more { fill: none; stroke: #c9c9c9; stroke-width: 1.4; }

/* ---------- Preview ---------- */
.pv-bar {
  height: 52px;
  background: #fdfdfd;
  border-radius: 10px 10px 0 0;
  display: grid;
  align-items: center;
  grid-template-columns: 81px 26.3px 25.7px 169px 45px 38px 41.7px 51.3px 29.3px 9.7px 36px 70.2px 29px auto;
  padding-left: 20px;
  box-shadow: 0 .5px 1px rgba(0,0,0,.3);
  position: relative;
  z-index: 1;
}
.pv-title { display: flex; flex-direction: column; white-space: nowrap; }
.pv-title b { font-size: 13.1px; font-weight: 700; color: #4a4a4a; line-height: 16px; letter-spacing: .14px; }
.pv-title span { font-size: 11px; color: #808080; line-height: 13px; letter-spacing: 0; }
.pv-sep { width: 1px; height: 20px; background: #e8e8e8; }
.pv-body { flex: 1; display: flex; overflow: hidden; border-radius: 0 0 10px 10px; background: #fff; }
.pv-edge { width: 7.5px; background: #999; flex: none; }
.paper {
  width: 686px;
  padding-left: 121.5px;
  font-family: "Liberation Serif", serif;
  font-size: 11.2px;
  line-height: 12.3px;
  color: #000;
}
.cap { white-space: nowrap; width: 446.2px; text-align-last: justify; }
.cap:first-child { margin-top: -2.4px; letter-spacing: -.105px; }
.cap.last { width: 368px; }
.tbl { margin: 11.1px 0 0 12.2px; width: 422.5px; border-top: 1.1px solid #000; height: 84px; }
.tbl-head { display: grid; grid-template-columns: 130px 113.3px 62.1px auto; padding: 2px 0 0 6.2px; white-space: nowrap; }
.rule { margin: 0; border: 0; height: 1px; background: #222; }
.rule.one { margin-top: 13.2px; }
.rule.two { margin-top: 53px; }
.frag { width: 446.2px; text-align: right; line-height: 12.25px; }
.frag small { display: block; font-size: 8.9px; line-height: 11px; }
.f0 { margin-top: 33px; }
.f0 span, .f3 span { margin-right: -1.2px; }
.f1 { margin-top: 104.9px; }
.f2 { margin-top: 18.8px; }
.f3 { margin-top: 60.6px; }
.f4 { margin-top: 19px; }
.f5 { margin-top: 18.25px; }
.f6 { margin-top: 19px; }
.pv-scroll { flex: 1; background: #fafafa; border-left: 1px solid #e6e6e6; padding: 340px 0 0 3px; }
.pv-scroll i { display: block; width: 8px; height: 54.5px; border-radius: 4px; background: #c1c1c1; }

/* ---------- Office shared ---------- */
.saved { color: #636363; }
.btn {
  display: flex;
  align-items: center;
  height: 24px;
  border: 1px solid #dadada;
  border-radius: 6px;
  background: #fff;
  font-size: 12.7px;
  letter-spacing: -.2px;
  font-weight: 500;
  color: #000;
  white-space: nowrap;
}
.btn svg { fill: none; stroke: #000; stroke-width: 1.1; stroke-linejoin: round; stroke-linecap: round; }
.btn .chev { stroke-width: 1.3; margin-left: auto; }
.b-comm { width: 102.5px; padding-left: 8px; }
.b-comm svg { margin-right: 4.5px; }
.b-edit { width: 94px; padding: 0 5.5px 0 8px; }
.b-edit svg { margin-right: 4.5px; }
.b-share { width: 87px; border: 0; padding: 0 5.5px 0 10px; color: #fff; font-weight: 600; }
.b-share svg { stroke: #fff; margin-right: 3.5px; }
.b-share .chev, .b-edit .chev { margin-right: 0; }
.green.btn { background: #127e43; }
.blue.btn { background: #185abd; }
.sep { width: 1px; height: 62px; background: #d2d2d2; flex: none; margin-top: 2px; align-self: flex-start; }
.ssep { width: 1px; height: 18px; background: #d2d2d2; flex: none; }
.big { display: flex; flex-direction: column; align-items: center; flex: none; }
.big span { font-size: 10.9px; line-height: 12px; letter-spacing: -.1px; text-align: center; white-space: nowrap; color: #000; }
.big.dim span { color: #8c8c8c; }

/* ---------- Word ---------- */
.w-title {
  height: 32px;
  background: #f5f5f5;
  border-radius: 10px 10px 0 0;
  box-shadow: inset 0 1px #fff;
  display: grid;
  align-items: center;
  grid-template-columns: 29px 18.5px 158.3px 112.2px 300px 34px auto;
  padding-left: 340px;
  font-size: 12px;
  white-space: nowrap;
}
.w-title .doc { font-size: 12.2px; letter-spacing: .04px; }
.w-title .saved { letter-spacing: -.2px; }
.w-tabs {
  height: 32px;
  background: #f5f5f5;
  display: grid;
  align-items: center;
  grid-template-columns: 84px 76px 68px 48.5px 20px 75px 112.7px 104px auto;
  padding-left: 335px;
  font-size: 12.7px;
  font-weight: 500;
  letter-spacing: -.15px;
  white-space: nowrap;
}
.w-tabs > span { padding-bottom: 3.6px; }
.w-tabs > span:first-child { margin-left: -2.6px; }
.w-tabs .bulb { margin-bottom: 3px; }
.w-ribbon { height: 73px; background: #f5f5f5; border-bottom: 1px solid #c8c8c8; display: flex; padding-left: 327px; }
.fontgrp { width: 87px; display: flex; flex-direction: column; padding-top: 10px; gap: 14px; }
.fontgrp > div { display: flex; }
.fontgrp .r1 { padding-left: 6px; }
.fontgrp .r1 .ssep { margin: 0 0 0 4.5px; }
.fontgrp .r2 { padding-left: 2px; height: 18px; }
.para { width: 189px; padding-top: 2.3px; }
.para > div { display: grid; align-items: center; height: 22px; justify-items: start; }
.p1 { grid-template-columns: 36px 36px 39px 13px 24px auto; padding-left: 13px; }
.p2 { grid-template-columns: 20px 28px 24px 26px 12px auto; padding-left: 14px; }
.p3 { grid-template-columns: 36px 39px 12px 27px 14px auto; padding-left: 13px; }
.on { width: 22px; height: 20px; border-radius: 3px; background: #c3c3c3; padding: 1px 4px; }
.w-ribbon .big { padding-top: 5px; gap: 4.4px; }
.k-styles { width: 50px; margin-left: 8px; }
.k-pane { width: 36px; margin: 0 10.5px 0 1.500px; }
.k-dict { width: 60.5px; }
.k-sens { width: 76px; }
.k-sens svg { margin-left: 7px; }
.k-add { width: 64px; }
.k-ed { width: 54px; }

.w-doc { flex: 1; display: flex; background: #ebebeb; overflow: hidden; }
.page {
  width: 924.7px;
  margin-left: 40.8px;
  margin-right: 40.5px;
  background: #fff;
  box-shadow: 0 0 0 .6px #c4c4c4;
  padding: 0 0 0 108.200px;
  font-family: "Liberation Serif", serif;
  font-size: 18.19px;
  line-height: 41.84px;
  color: #000;
}
.page p { white-space: nowrap; }
.page p:first-child { margin-top: -3.3px; }
.page .end { text-align: right; }
.page .ind { text-indent: 54.5px; }
.w-vscroll { flex: 1; background: #fafafa; padding: 285px 0 0 3px; }
.w-vscroll i { display: block; width: 8px; height: 18px; border-radius: 4px; background: #7d7d7d; }
.w-hscroll { height: 15px; background: #fafafa; border-top: 1px solid #e6e6e6; border-bottom: 1px solid #eee; }
.w-status {
  height: 23px;
  border-top: 1px solid #a0a0a0;
  border-radius: 0 0 10px 10px;
  background: linear-gradient(#e5e5e5, #d8d8d8);
  display: grid;
  align-items: center;
  grid-template-columns: 91.5px 86px 34.8px 149px 19px 194px 22px 44px 46.5px 36.5px 36px 33px 15px 107px 26px auto;
  padding-left: 24.2px;
  font-size: 11.7px;
  letter-spacing: .03px;
  color: #4a4a4a;
  white-space: nowrap;
}
.sel { width: 37px; height: 24px; background: #a3a3a3; margin-top: -2px; padding: 5px 0 0 11px; }
.sel svg { fill: none; stroke: #fff; stroke-width: 1.1; }
.slider { width: 99.7px; height: 4px; border-radius: 2px; background: #9b9b9b; position: relative; }
.slider i { position: absolute; left: 47.6px; top: -6px; width: 16px; height: 16px; border-radius: 50%; background: #fff; box-shadow: 0 .5px 1.5px rgba(0,0,0,.4); }

/* ---------- Excel ---------- */
.x-title {
  height: 32px;
  background: #f5f5f5;
  border-radius: 10px 10px 0 0;
  box-shadow: inset 0 1px #fff;
  display: grid;
  align-items: center;
  grid-template-columns: 78.5px 59.5px 40.5px 27px 27px 28px 22px 17px 27.5px 29px 22px 75.5px 22.5px 33px auto;
  padding-left: 13px;
  white-space: nowrap;
  font-size: 12px;
}
.x-title .saved { font-size: 11.7px; letter-spacing: -.2px; }
.auto { font-size: 11.3px; letter-spacing: -.1px; color: #5c5c5c; }
.toggle { width: 28px; height: 14px; border-radius: 7px; background: linear-gradient(#7b7b7b, #999); }
.toggle i { display: block; width: 12.5px; height: 12.5px; transform: translate(.7px, .7px); border-radius: 50%; background: #fff; box-shadow: 0 .5px 1px rgba(0,0,0,.4); }
.x-tabs {
  height: 32px;
  background: #f5f5f5;
  display: grid;
  align-items: center;
  grid-template-columns: 60px 62px 46.8px 20.5px 21px 119px 113px auto;
  padding-left: 11.5px;
  font-size: 12.7px;
  font-weight: 500;
  letter-spacing: -.15px;
  white-space: nowrap;
}
.x-tabs > span { padding-bottom: 3.3px; }
.x-tabs .bulb, .x-tabs .more { margin-bottom: 3px; }
.x-tabs .cur { font-weight: 700; position: relative; width: 38.5px; letter-spacing: .12px; }
.x-tabs .cur::after { content: ""; position: absolute; left: -1px; right: 0; bottom: -6px; height: 3px; border-radius: 1.5px; background: #217346; }
.x-ribbon { height: 73px; background: #f5f5f5; display: flex; }
.x-groups { width: 536px; display: flex; border-bottom: 1px solid #c8c8c8; overflow: hidden; }
.x-groups .big { padding-top: 6px; gap: 5.5px; }
.k-ill { width: 50px; }
.k-ill span { align-self: flex-start; width: 37.2px; display: flex; justify-content: flex-end; }
.k-rec { width: 74px; margin-left: 12.5px; }
.x-small { display: grid; grid-template-columns: 34px 34px; column-gap: 2px; grid-auto-rows: 19px; padding-top: 3.5px; margin-left: 5px; align-content: start; }
.hot { background: linear-gradient(#a6a6a6, #b9b9b9); border-radius: 3px; }
.x-small2 { width: 34px; display: flex; flex-direction: column; gap: 9px; padding-top: 12px; margin-left: 2px; }
.k-maps { width: 48px; margin-left: 3px; }
.k-piv { width: 54px; margin-left: 4.500px; }
.k-piv + .sep { margin-left: 11px; }
.k-piv svg { margin-bottom: -1px; }
.k-spark { width: 56px; margin-left: 10.5px; }
.k-spark + .sep { margin-left: 10.5px; }
.x-slice { margin-left: 13.500px; display: flex; flex-direction: column; padding-top: 10px; gap: 14px; }
.x-slice > div { display: flex; align-items: center; gap: 5.4px; height: 18px; font-size: 10.8px; color: #858585; }
.x-next { flex: 1; border: 1px solid #c8c8c8; border-width: 1px 0 0 1px; margin-top: 1px; padding: 32px 0 0 4px; }
.x-formula { height: 29px; background: #fff; display: flex; box-shadow: inset 0 -1px #8f8f8f, inset 0 -2px #e8e8e8, inset 0 -3px #ababab; }
.namebox { width: 85px; height: 25px; margin-left: .6px; border: 1px solid #acacac; border-bottom: 0; border-right-color: #b0b0b0; padding: 0 4px 0 9px; display: flex; justify-content: space-between; align-items: center; font-size: 12.500px; letter-spacing: -.1px; }
.namebox svg { margin-right: .4px; }
.xv { fill: none; stroke: #cbcbcb; stroke-width: 2.2; stroke-linecap: round; margin-top: 6px; }
.dn { margin: 10.500px 3.500px 0 auto; }

.x-grid { height: 247.500px; background: #fff; position: relative; overflow: hidden; display: flex; flex-direction: column; border-bottom: 1px solid #c8c8c8; }
.hd, .row { display: grid; grid-template-columns: 23px 65px 356px 33.5px 65px 8.5px; }
.hd { height: 22px; flex: none; background: linear-gradient(#fff, #f6f6f6); border-bottom: 1px solid #b0b0b0; font-size: 11px; color: #5f5f5f; z-index: 1; }
.hd span { border-right: 1px solid #dadada; text-align: center; line-height: 22.500px; }
.hd span:nth-child(3) { padding-right: 290.500px; }
.hd .corner { border-right: 1px solid #b5b5b5; position: relative; }
.hd .corner::before { content: ""; position: absolute; right: 2px; bottom: 2px; width: 15px; height: 13px; background: #dedede; clip-path: polygon(100% 0, 100% 100%, 0 100%); }
.hd .a { background: #f1f1f1; color: #217346; font-weight: 500; box-shadow: 0 2px #217346; height: 20px; }
.rows { margin-top: -11px; font-family: "Liberation Sans", Arial, sans-serif; font-size: 10.7px; color: #000; }
.row { height: 16px; }
.row > * { border-right: 1px solid #d2d2d2; border-bottom: 1px solid #d2d2d2; line-height: 17px; height: 16px; overflow: hidden; white-space: nowrap; font-weight: 400; text-decoration: none; padding-left: 2.4px; }
.row u { text-decoration: none; letter-spacing: -.9px; word-spacing: .9px; white-space: pre; }
.row > b { color: #5f5f5f; text-align: right; padding: 0 2.5px 0 0; border-right-color: #b5b5b5; background: #fafafa; border-bottom-color: #e2e2e2; letter-spacing: -.1px; }
.row > span:nth-child(2) { text-align: right; padding-right: 2.2px; }
.row.in > b { color: #217346; background: #f1f1f1; }
.row.f > span:nth-child(2) { background: #c6c6c6; border-bottom-color: #a3a3a3; }
.row .s1 { padding-left: 10.3px; }
.row .s2 { padding-left: 13.2px; }
.row .s3 { padding-left: 13.1px; }
.row .wide { grid-column: span 2; }
.selection { position: absolute; left: 21px; top: 57px; width: 68px; height: 163px; border: 2px solid #217346; box-shadow: inset 0 0 0 1px #fff; z-index: 2; }
.selection i { position: absolute; right: -3px; bottom: -3px; width: 5px; height: 5px; background: #217346; box-shadow: 0 0 0 1px #fff; }

.x-sheets { height: 25.5px; background: #efefef; display: flex; }
.x-sheets > svg { margin-top: 7px; }
.sheet-tab { background: #fff; height: 22px; width: 120px; padding-left: 19px; font-size: 12px; font-weight: 600; line-height: 24.6px; color: #26874f; border-radius: 0 0 3px 3px; box-shadow: 0 .6px .5px #999, inset 1px 0 #ccc; letter-spacing: -.1px; white-space: nowrap; }
.x-status { height: 23px; border-top: 1px solid #9f9f9f; border-radius: 0 0 10px 10px; background: linear-gradient(#e5e5e5, #d8d8d8); display: flex; align-items: center; padding-left: 130.6px; font-size: 11.6px; color: #4a4a4a; }
.x-status span { width: 315px; }
.x-status i { width: 19.5px; height: 24px; margin: -2px 10.5px 0 0; background: #9c9c9c; }
.x-status svg + svg { margin-left: 20.5px; }

/* ---------- gallery ---------- */
.gallery {
  position: absolute;
  left: 197.8px;
  top: 237.7px;
  width: 318.3px;
  height: 398.3px;
  padding-top: 4.3px;
  border-radius: 5px;
  background: #ebebeb;
  box-shadow: 0 0 0 .6px rgba(0,0,0,.3), 0 6px 16px rgba(0,0,0,.32);
}
.gallery h3 { height: 23.5px; border: 1px solid #d2d2d2; border-width: 1px 0; background: linear-gradient(#e5e5e5, #dbdbdb); padding-left: 5px; font-size: 12px; line-height: 23.2px; color: #6e6e6e; letter-spacing: .1px; }
.cards { display: flex; gap: 10px; padding: 5.5px 5.2px; height: 106.6px; }
.cards svg { width: 96px; height: 96px; background: #fff; border: 1px solid #c6c6c6; stroke: #4f6797; stroke-width: .9; fill: none; stroke-linejoin: round; }

.cursor { position: absolute; left: 640px; top: 190px; filter: drop-shadow(0 2px 1.5px rgba(0,0,0,.4)); }
```
